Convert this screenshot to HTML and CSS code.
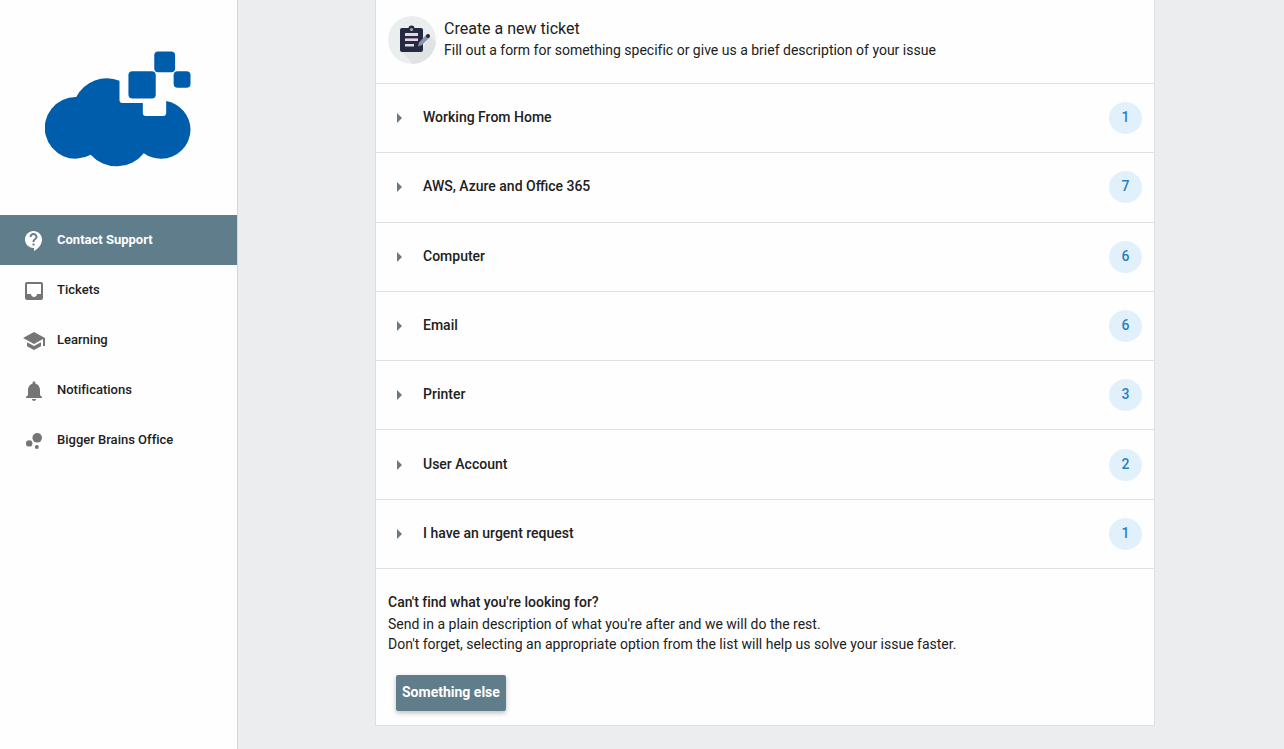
FILE: index.html
```html
<!DOCTYPE html>
<html lang="en">
<head>
  <meta charset="UTF-8">
  <meta name="viewport" content="width=device-width, initial-scale=1.0">
  <title>Contact Support</title>
  <link rel="stylesheet" href="styles.css">
</head>
<body>
  <aside class="sidebar">
    <!-- Logo -->
    <div class="logo">
      <svg width="148" height="117" viewBox="0 0 148 117" role="img" aria-label="Company logo">
        <g fill="#005dab">
          <path d="M75 30.500 V50 Q75 53 78 53 H98.500 V63 Q98.500 66 101.500 66 H119 Q122 66 122 63 V51 A29.500 29.500 0 0 1 146.500 80 A29.500 29.500 0 0 1 117 109 A29.500 29.500 0 0 1 99.500 103.500 A35 35 0 0 1 46 105 A31 31 0 1 1 31.500 47 A34.500 34.500 0 0 1 75 30.500 Z"/>
          <rect x="84" y="21" width="27.500" height="27.500" rx="4"/>
          <rect x="110" y="1" width="21" height="21" rx="4"/>
          <rect x="129.500" y="21" width="17" height="16.500" rx="4"/>
        </g>
      </svg>
    </div>

    <!-- Navigation -->
    <nav class="nav">
      <a href="#" class="nav-link active">
        <svg class="icon" viewBox="0 0 24 24"><path d="M11.500 2C6.810 2 3 5.810 3 10.500S6.810 19 11.500 19h.5v3c4.860-2.340 8-7 8-11.500C20 5.810 16.190 2 11.500 2zm1 14.500h-2v-2h2v2zm0-3.500h-2c0-3.250 3-3 3-5 0-1.100-.9-2-2-2s-2 .9-2 2h-2c0-2.210 1.790-4 4-4s4 1.790 4 4c0 2.500-3 2.750-3 5z"/></svg>
        <span class="label">Contact Support</span>
      </a>
      <a href="#" class="nav-link">
        <svg class="icon" viewBox="0 0 24 24"><path d="M19 3H5c-1.100 0-2 .9-2 2v14c0 1.100.9 2 2 2h14c1.100 0 2-.9 2-2V5c0-1.100-.9-2-2-2zm0 12h-4c0 1.660-1.350 3-3 3s-3-1.340-3-3H5V5h14v10z"/></svg>
        <span class="label">Tickets</span>
      </a>
      <a href="#" class="nav-link">
        <svg class="icon" viewBox="0 0 24 24"><path d="M5 13.180v4L12 21l7-3.820v-4L12 17l-7-3.820zM12 3L1 9l11 6 9-4.910V17h2V9L12 3z"/></svg>
        <span class="label">Learning</span>
      </a>
      <a href="#" class="nav-link">
        <svg class="icon" viewBox="0 0 24 24"><path d="M12 22c1.100 0 2-.9 2-2h-4c0 1.100.9 2 2 2zm6-6v-5c0-3.070-1.630-5.640-4.500-6.320V4c0-.83-.67-1.500-1.500-1.500s-1.500.67-1.500 1.500v.68C7.640 5.360 6 7.920 6 11v5l-2 2v1h16v-1l-2-2z"/></svg>
        <span class="label">Notifications</span>
      </a>
      <a href="#" class="nav-link">
        <svg class="icon" viewBox="0 0 24 24"><circle cx="7.200" cy="14.400" r="3.200"/><circle cx="14.800" cy="18" r="2"/><circle cx="15.200" cy="8.800" r="4.800"/></svg>
        <span class="label">Bigger Brains Office</span>
      </a>
    </nav>
  </aside>

  <main class="content">
    <section class="card">
      <header class="card-header">
        <svg class="ticket-icon" width="48" height="48" viewBox="0 0 48 48" aria-hidden="true">
          <circle cx="24" cy="24" r="24" fill="#ebeeef"/>
          <path d="M13 35 L34 34 L42 20 L48 26 A24 24 0 0 1 25 48 Z" fill="#dfe3e4"/>
          <rect x="12" y="12" width="23" height="24" rx="2" fill="#262a40"/>
          <path d="M18 15 V12.500 H20.500 A3 3 0 0 1 26.500 12.500 H29 V15 Z" fill="#262a40"/>
          <circle cx="23.500" cy="13.500" r="1.500" fill="#aab0b8"/>
          <path d="M17 17h13v3H17z M17 22h13v3H17z M17 28h9v2.500H17z" fill="#dadce3"/>
          <path d="M17 22h13v1H17z" fill="#a58aa3"/>
          <path d="M30 30.500 L31 26.500 L38 19 L41 22 L34 29 Z" fill="#8495ad"/>
          <circle cx="40" cy="20" r="2" fill="#24262d"/>
        </svg>
        <div>
          <h1 class="card-title">Create a new ticket</h1>
          <p class="text">Fill out a form for something specific or give us a brief description of your issue</p>
        </div>
      </header>

      <!-- Ticket categories -->
      <ul class="categories">
        <li><button class="category" aria-expanded="false"><span class="arrow"></span><span class="name">Working From Home</span><span class="count">1</span></button></li>
        <li><button class="category" aria-expanded="false"><span class="arrow"></span><span class="name">AWS, Azure and Office 365</span><span class="count">7</span></button></li>
        <li><button class="category" aria-expanded="false"><span class="arrow"></span><span class="name">Computer</span><span class="count">6</span></button></li>
        <li><button class="category" aria-expanded="false"><span class="arrow"></span><span class="name">Email</span><span class="count">6</span></button></li>
        <li><button class="category" aria-expanded="false"><span class="arrow"></span><span class="name">Printer</span><span class="count">3</span></button></li>
        <li><button class="category" aria-expanded="false"><span class="arrow"></span><span class="name">User Account</span><span class="count">2</span></button></li>
        <li><button class="category" aria-expanded="false"><span class="arrow"></span><span class="name">I have an urgent request</span><span class="count">1</span></button></li>
      </ul>

      <footer class="card-footer">
        <h2 class="footer-title">Can't find what you're looking for?</h2>
        <p class="text">Send in a plain description of what you're after and we will do the rest.</p>
        <p class="text">Don't forget, selecting an appropriate option from the list will help us solve your issue faster.</p>
        <button class="button">Something else</button>
      </footer>
    </section>
  </main>
</body>
</html>
```
FILE: styles.css
```css
* {
  box-sizing: border-box;
}
body {
  display: flex;
  min-height: 100vh;
  margin: 0;
  font-family: Roboto, sans-serif;
  font-size: 14px;
  font-variant-ligatures: none;
  color: #212121;
  background-color: #ecedef;
}
h1, h2, p, ul {
  margin: 0;
  padding: 0;
}
button {
  font-family: inherit;
  color: inherit;
  border: none;
  cursor: pointer;
}

/* Sidebar */
.sidebar {
  flex: none;
  width: 238px;
  background-color: #fefefe;
  border-right: 1px solid #d3d4d5;
}
.logo {
  display: flex;
  padding: 50px 45px 48px;
}
.nav-link {
  display: flex;
  align-items: center;
  gap: 11px;
  height: 50px;
  padding: 0 22px;
  font-size: 13px;
  font-weight: 500;
  color: #212121;
  text-decoration: none;
}
.nav-link.active {
  color: #fff;
  font-weight: 700;
  background-color: #607d8b;
}
.label {
  padding-bottom: 2px;
}
.icon {
  flex: none;
  width: 24px;
  height: 24px;
  margin-top: 2px;
  fill: #757575;
}
.active .icon {
  fill: #fff;
}

/* Ticket card */
.content {
  flex: 1;
  padding: 0 16px 23px 24px;
}
.card {
  max-width: 780px;
  margin: 0 auto;
  background-color: #fefefe;
  border: 1px solid #dedfe0;
  border-top: none;
}
.card-header {
  display: flex;
  gap: 8px;
  padding: 16px 12px 19px;
}
.ticket-icon {
  flex: none;
}
.card-title {
  padding-top: 2px;
  font-size: 16px;
  font-weight: 400;
  line-height: 22px;
}
.text {
  line-height: 20px;
}
.categories {
  display: grid;
  grid-auto-rows: 1fr;
  min-height: 485px;
  list-style: none;
}
.category {
  display: flex;
  align-items: center;
  width: 100%;
  height: 100%;
  padding: 0 12px 0 21px;
  font-size: 14px;
  font-weight: 500;
  text-align: left;
  background: none;
  border-top: 1px solid #dedfe0;
}
.arrow {
  border: 5px solid transparent;
  border-left-color: #6a7883;
  border-right: none;
}
.name {
  flex: 1;
  padding: 0 21px 2px;
}
.count {
  width: 33px;
  padding-bottom: 2px;
  line-height: 30px;
  font-weight: 500;
  text-align: center;
  color: #2a7fbe;
  background-color: #e1f1fc;
  border-radius: 50%;
}
.card-footer {
  padding: 22px 12px 14px;
  border-top: 1px solid #dedfe0;
}
.footer-title {
  font-size: 14px;
  font-weight: 500;
  line-height: 23px;
}
.button {
  height: 36px;
  margin: 21px 8px 0;
  padding: 0 6px 2px;
  font-size: 14px;
  font-weight: 700;
  color: #fff;
  background-color: #607d8b;
  border-radius: 2px;
  box-shadow: 0 2px 5px rgba(0, 0, 0, 0.26);
}
```
